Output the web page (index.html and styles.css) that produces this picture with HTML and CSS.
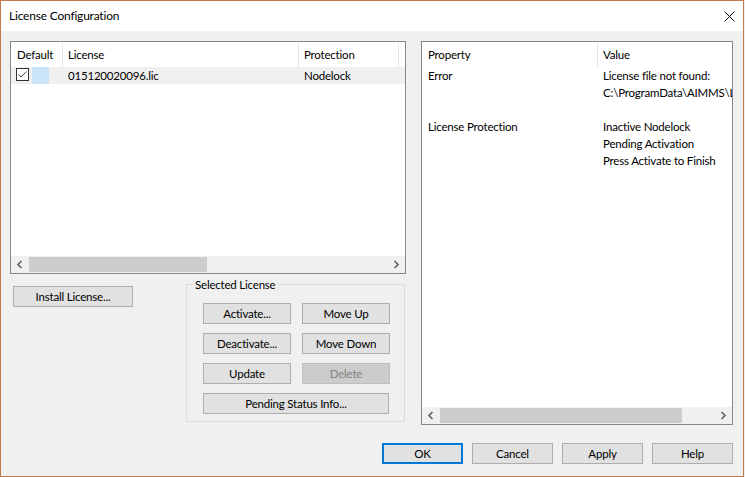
FILE: index.html
```html
<!DOCTYPE html>
<html>
<head>
<meta charset="utf-8">
<title>License Configuration</title>
<link rel="stylesheet" href="styles.css">
</head>
<body>
<div class="window">
  <div class="titlebar">
    <span class="title">License Configuration</span>
    <svg class="close" width="11" height="11" viewBox="0 0 11 11"><path d="M0.5 0.5 L10.5 10.5 M10.5 0.5 L0.5 10.5" stroke="#000" stroke-width="1" fill="none"/></svg>
  </div>
  <div class="content">
    <div class="main">
      <div class="left">
        <div class="listbox lic-list">
          <div class="lv-header">
            <div class="hcell c-default hfirst">Default</div>
            <div class="hcell c-license">License</div>
            <div class="hcell c-prot">Protection</div>
            <div class="hcell c-rest"></div>
          </div>
          <div class="lv-body">
            <div class="lv-row">
              <div class="c-default cell-check">
                <svg class="checkbox" width="13" height="13" viewBox="0 0 13 13"><rect x="0.5" y="0.5" width="12" height="12" fill="#fff" stroke="#333"/><path d="M2.5 6.5 L5 9 L10.5 3.5" fill="none" stroke="#444" stroke-width="1"/></svg>
                <span class="state"></span>
              </div>
              <div class="c-license cell">015120020096.lic</div>
              <div class="c-prot cell">Nodelock</div>
            </div>
          </div>
          <div class="hscroll">
            <div class="arrow"><svg width="17" height="17" viewBox="0 0 17 17"><path d="M10.5 5 L7 8.5 L10.5 12" fill="none" stroke="#606060" stroke-width="1.6"/></svg></div>
            <div class="track"><div class="thumb thumb-left"></div></div>
            <div class="arrow"><svg width="17" height="17" viewBox="0 0 17 17"><path d="M6.5 5 L10 8.5 L6.5 12" fill="none" stroke="#606060" stroke-width="1.6"/></svg></div>
          </div>
        </div>
        <div class="left-bottom">
          <button class="btn install">Install License...</button>
          <fieldset class="group">
            <legend>Selected License</legend>
            <div class="group-grid">
              <button class="btn">Activate...</button>
              <button class="btn">Move Up</button>
              <button class="btn">Deactivate...</button>
              <button class="btn">Move Down</button>
              <button class="btn">Update</button>
              <button class="btn disabled" disabled>Delete</button>
              <button class="btn wide">Pending Status Info...</button>
            </div>
          </fieldset>
        </div>
      </div>
      <div class="listbox props">
        <div class="lv-header">
          <div class="hcell c-property hfirst">Property</div>
          <div class="hcell c-value">Value</div>
        </div>
        <div class="props-body">
          <div class="pcell gap-after">Error</div>
          <div class="vcell gap-after">
            <div>License file not found:</div>
            <div>C:\ProgramData\AIMMS\Licenses\015120020096.lic</div>
          </div>
          <div class="pcell">License Protection</div>
          <div class="vcell">
            <div>Inactive Nodelock</div>
            <div>Pending Activation</div>
            <div>Press Activate to Finish</div>
          </div>
        </div>
        <div class="hscroll">
          <div class="arrow"><svg width="17" height="17" viewBox="0 0 17 17"><path d="M10.5 5 L7 8.5 L10.5 12" fill="none" stroke="#606060" stroke-width="1.6"/></svg></div>
          <div class="track"><div class="thumb thumb-right"></div></div>
          <div class="arrow"><svg width="17" height="17" viewBox="0 0 17 17"><path d="M6.5 5 L10 8.5 L6.5 12" fill="none" stroke="#606060" stroke-width="1.6"/></svg></div>
        </div>
      </div>
    </div>
    <div class="footer">
      <button class="btn fbtn default">OK</button>
      <button class="btn fbtn">Cancel</button>
      <button class="btn fbtn">Apply</button>
      <button class="btn fbtn">Help</button>
    </div>
  </div>
</div>
</body>
</html>
```

FILE: styles.css
```css
* { box-sizing: border-box; }

html, body {
  margin: 0;
  padding: 0;
  background: #f0f0f0;
}

body {
  font-family: "Segoe UI", Lato, "Liberation Sans", Arial, sans-serif;
  font-size: 11.5px;
  letter-spacing: -0.2px;
  color: #000;
}

.window {
  width: 744px;
  height: 477px;
  border: 1px solid #c47a4b;
  display: flex;
  flex-direction: column;
  background: #f0f0f0;
}

.titlebar {
  flex: none;
  height: 30px;
  background: #fff;
  display: flex;
  align-items: center;
  justify-content: space-between;
  padding: 0 8px 0 8px;
}

.title {
  font-size: 12px;
  line-height: 16px;
}

.close {
  display: block;
}

.content {
  flex: 1;
  display: flex;
  flex-direction: column;
  padding: 10px 10px 12px 9px;
}

.main {
  display: flex;
  gap: 15px;
  height: 384px;
  flex: none;
}

.left {
  width: 396px;
  display: flex;
  flex-direction: column;
}

.listbox {
  border: 1px solid #828790;
  background: #fff;
  display: flex;
  flex-direction: column;
  overflow: hidden;
}

.lic-list {
  height: 233px;
  flex: none;
}

.props {
  width: 312px;
  height: 384px;
}

.lv-header {
  display: flex;
  height: 25px;
  flex: none;
}

.hcell {
  height: 24px;
  margin-top: 1px;
  line-height: 24px;
  border-right: 1px solid #e5e5e5;
  padding-left: 5px;
  white-space: nowrap;
  flex: none;
}

.hfirst {
  padding-left: 6px;
}

.c-default { width: 52px; }
.c-license { width: 236px; }
.c-prot { width: 100px; }
.c-rest { flex: 1; border-right: none; }

.c-property { width: 176px; }
.c-value { flex: 1; border-right: none; }

.lv-body {
  flex: 1;
}

.lv-row {
  display: flex;
  height: 17px;
  line-height: 17px;
  background: #f0f0f0;
}

.cell {
  padding-left: 5px;
  line-height: 17px;
  white-space: nowrap;
  flex: none;
}

.cell-check {
  display: flex;
  align-items: flex-start;
  gap: 3px;
  padding-left: 5px;
  flex: none;
}

.checkbox {
  display: block;
  margin-top: 1px;
}

.state {
  display: block;
  width: 17px;
  height: 17px;
  background: #cce4f7;
}

.hscroll {
  flex: none;
  height: 17px;
  display: flex;
  background: #f0f0f0;
}

.arrow {
  width: 17px;
  height: 17px;
  flex: none;
}

.arrow svg {
  display: block;
}

.track {
  flex: 1;
  padding: 1px 0 1px 1px;
}

.thumb {
  height: 15px;
  background: #cdcdcd;
}

.thumb-left { width: 178px; }
.thumb-right { width: 242px; }

.left-bottom {
  display: flex;
  align-items: flex-start;
}

.btn {
  height: 21px;
  padding: 1px 0 0 0;
  margin: 0;
  background: #e1e1e1;
  border: 1px solid #adadad;
  border-radius: 0;
  font-family: inherit;
  font-size: 11.5px;
  letter-spacing: -0.2px;
  line-height: 18px;
  color: #000;
  text-align: center;
  white-space: nowrap;
}

.btn.disabled {
  background: #cccccc;
  border-color: #bfbfbf;
  color: #838383;
}

.btn.default {
  border: 2px solid #0078d7;
  line-height: 16px;
}

.install {
  width: 120px;
  margin: 12px 0 0 3px;
}

.group {
  margin: 2px 1px 0 auto;
  width: 219px;
  min-width: 0;
  border: 1px solid #dcdcdc;
  padding: 10px 14px 7px 16px;
}

.group legend {
  padding: 0 2px;
  margin-left: -10px;
  line-height: 17px;
}

.group-grid {
  display: grid;
  grid-template-columns: 88px 88px;
  column-gap: 11px;
  row-gap: 9px;
}

.group-grid .btn {
  width: 88px;
}

.group-grid .wide {
  grid-column: 1 / 3;
  width: 186px;
}

.props-body {
  flex: 1;
  display: grid;
  grid-template-columns: 176px 1fr;
  align-content: start;
  line-height: 17px;
}

.pcell {
  padding-left: 6px;
  white-space: nowrap;
}

.vcell {
  padding-left: 5px;
  white-space: nowrap;
  overflow: hidden;
}

.gap-after {
  padding-bottom: 17px;
}

.footer {
  display: flex;
  justify-content: flex-end;
  gap: 9px;
  margin-top: 18px;
}

.fbtn {
  width: 81px;
}
```
